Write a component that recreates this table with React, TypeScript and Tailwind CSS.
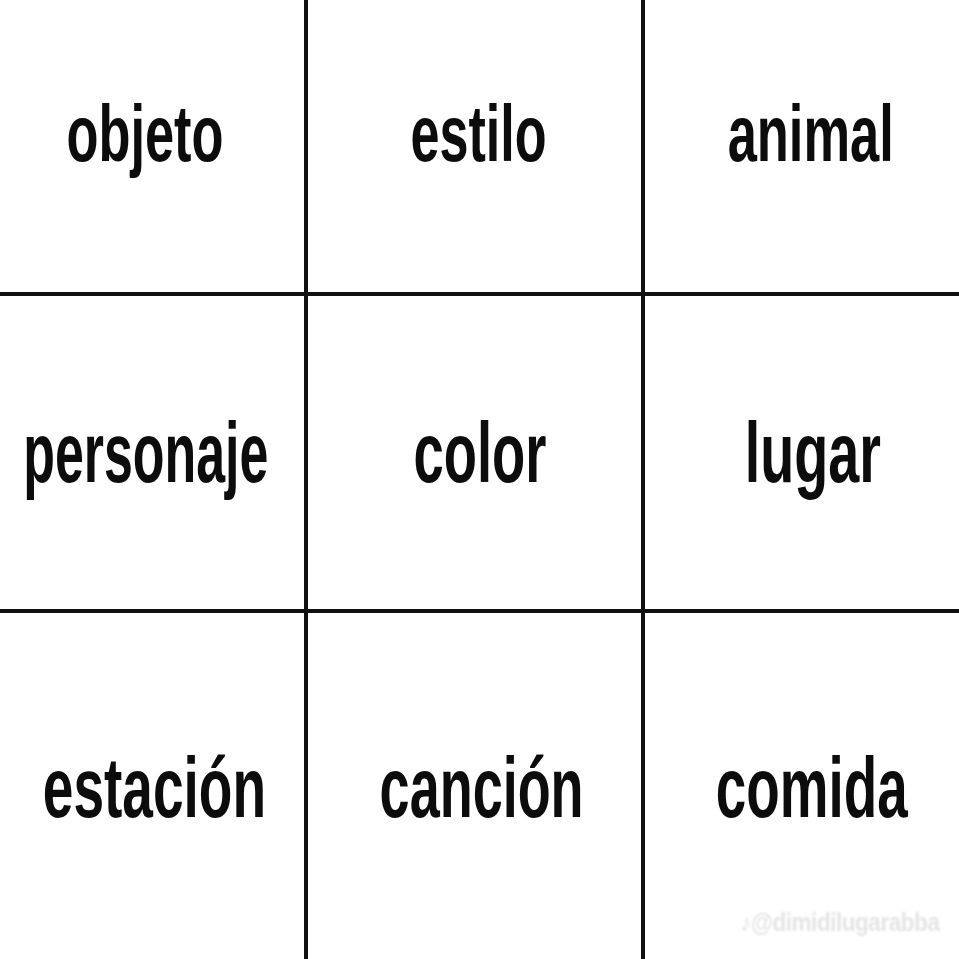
import React from "react";

type Cell = { word: string; cls: string };

const rows: { h: string; cells: Cell[] }[] = [
  {
    h: "h-[292px] pb-[24px]",
    cells: [
      { word: "objeto", cls: "pr-[15px] text-[80px] [&>span]:scale-x-[0.654]" },
      { word: "estilo", cls: "pl-[7px] text-[80px] [&>span]:scale-x-[0.651]" },
      { word: "animal", cls: "pl-[18px] text-[80px] [&>span]:scale-x-[0.655]" },
    ],
  },
  {
    h: "h-[313px]",
    cells: [
      { word: "personaje", cls: "pr-[12px] text-[85px] [&>span]:scale-x-[0.61]" },
      { word: "color", cls: "pl-[10px] text-[85px] [&>span]:scale-x-[0.64]" },
      { word: "lugar", cls: "pl-[22px] text-[85px] [&>span]:scale-x-[0.655]" },
    ],
  },
  {
    h: "h-[346px] pt-[3px]",
    cells: [
      { word: "estación", cls: "pl-[5px] text-[85px] [&>span]:scale-x-[0.647]" },
      { word: "canción", cls: "pl-[15px] text-[85px] [&>span]:scale-x-[0.635]" },
      { word: "comida", cls: "pl-[20px] text-[85px] [&>span]:scale-x-[0.645]" },
    ],
  },
];

export default function App() {
  return (
    <div className="w-[959px] h-[959px] bg-[#111111] relative overflow-hidden">
      <div className="grid grid-cols-[304px_333px_314px] gap-[4px] w-[959px] h-[959px]">
        {rows.map((r) =>
          r.cells.map((c) => (
            <div
              key={c.word}
              className={`${r.h} ${c.cls} bg-white flex items-center justify-center`}
            >
              <span
                className="inline-block leading-none font-bold text-[#0c0c0c] whitespace-nowrap"
                style={{ fontFamily: '"Liberation Sans", Arial, sans-serif' }}
              >
                {c.word}
              </span>
            </div>
          ))
        )}
      </div>
      <div
        className="absolute right-[20px] bottom-[18px] text-[25px] font-bold text-[#e4e4e4] tracking-[-0.5px] blur-[1px] scale-x-[0.9] origin-right"
        style={{ fontFamily: '"Liberation Sans", sans-serif' }}
      >
        ♪@dimidilugarabba
      </div>
    </div>
  );
}
